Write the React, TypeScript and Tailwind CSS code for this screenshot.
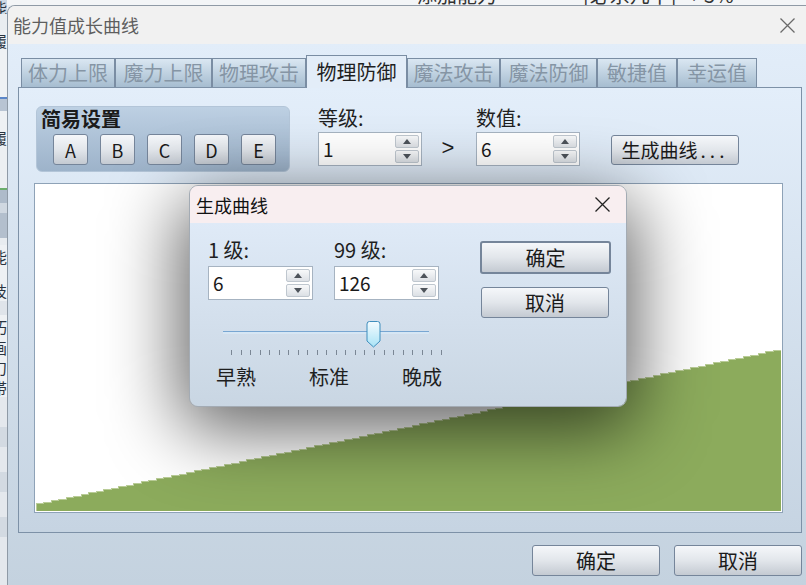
import React from "react";

function Arrow({ up }: { up?: boolean }) {
  return (
    <svg width="8" height="5" viewBox="0 0 8 5">
      <path d={up ? "M0 5 L4 0 L8 5 Z" : "M0 0 L8 0 L4 5 Z"} fill="#4d535a" />
    </svg>
  );
}

function SpinBox({ value, wide }: { value: string; wide?: boolean }) {
  return (
    <div className={`flex h-[34px] items-center border border-[#a6b3c1] bg-white ${wide ? "w-[105px]" : "w-[104px]"}`}>
      <span className="flex-1 pl-[4px] text-[19px] leading-[24px] text-[#1a1a1a]">{value}</span>
      <div className="mr-[2px] flex flex-col gap-[2px]">
        <div className="flex h-[13px] w-[24px] items-center justify-center rounded-[2px] border border-[#bfc7cf] bg-gradient-to-b from-[#f8f9fa] to-[#dce0e5]">
          <Arrow up />
        </div>
        <div className="flex h-[13px] w-[24px] items-center justify-center rounded-[2px] border border-[#bfc7cf] bg-gradient-to-b from-[#f8f9fa] to-[#dce0e5]">
          <Arrow />
        </div>
      </div>
    </div>
  );
}

function Btn({ children, className }: { children: React.ReactNode; className: string }) {
  return (
    <div
      className={`flex items-center justify-center rounded-[3px] border border-[#75859a] bg-gradient-to-b from-[#f5f7fa] via-[#e2e6eb] to-[#c4cad2] text-[#1a1a1a] ${className}`}
    >
      {children}
    </div>
  );
}

function CloseX({ color, size }: { color: string; size: number }) {
  return (
    <svg width={size} height={size} viewBox="0 0 15 15">
      <path d="M0.5 0.5 L14.5 14.5 M14.5 0.5 L0.5 14.5" stroke={color} strokeWidth="1.3" fill="none" />
    </svg>
  );
}

const tabs: { label: string; cls: string; active?: boolean }[] = [
  { label: "体力上限", cls: "w-[94px]" },
  { label: "魔力上限", cls: "w-[97px]" },
  { label: "物理攻击", cls: "w-[94px]" },
  { label: "物理防御", cls: "w-[101px]", active: true },
  { label: "魔法攻击", cls: "w-[93px]" },
  { label: "魔法防御", cls: "w-[97px]" },
  { label: "敏捷值", cls: "w-[80px]" },
  { label: "幸运值", cls: "w-[80px]" },
];

function chartPath() {
  const W = 745;
  const H = 326;
  let d = `M0 ${H}`;
  for (let i = 0; i < 99; i++) {
    const v = 6 + (120 * i) / 98;
    const h = Math.round((v / 255) * H);
    const x0 = ((i * W) / 99).toFixed(1);
    const x1 = (((i + 1) * W) / 99).toFixed(1);
    d += ` L${x0} ${H - h} L${x1} ${H - h}`;
  }
  d += ` L${W} ${H} Z`;
  return d;
}

const strip: { h: string; bg: string; ch?: string }[] = [
  { h: "h-[14px]", bg: "bg-[#cdd8e4]", ch: "能" },
  { h: "h-[16px]", bg: "bg-[#e9edf1]" },
  { h: "h-[20px]", bg: "bg-[#eef1f4]", ch: "履" },
  { h: "h-[47px]", bg: "bg-[#eef1f4]" },
  { h: "h-[2px]", bg: "bg-[#5b86c8]" },
  { h: "h-[12px]", bg: "bg-[#b8c4d3]" },
  { h: "h-[16px]", bg: "bg-[#eef1f4]" },
  { h: "h-[20px]", bg: "bg-[#eef1f4]", ch: "履" },
  { h: "h-[41px]", bg: "bg-[#eceff2]" },
  { h: "h-[2px]", bg: "bg-[#6cae6c]" },
  { h: "h-[13px]", bg: "bg-[#aebbca]" },
  { h: "h-[10px]", bg: "bg-[#d0d8e1]" },
  { h: "h-[25px]", bg: "bg-[#b3bfcd]" },
  { h: "h-[7px]", bg: "bg-[#e8ecf0]" },
  { h: "h-[22px]", bg: "bg-[#eef1f4]", ch: "能" },
  { h: "h-[12px]", bg: "bg-[#eef1f4]" },
  { h: "h-[22px]", bg: "bg-[#eef1f4]", ch: "技" },
  { h: "h-[14px]", bg: "bg-[#dfe4ea]" },
  { h: "h-[22px]", bg: "bg-[#eef1f4]", ch: "巧" },
  { h: "h-[20px]", bg: "bg-[#eef1f4]", ch: "画" },
  { h: "h-[20px]", bg: "bg-[#eef1f4]", ch: "刀" },
  { h: "h-[20px]", bg: "bg-[#eef1f4]", ch: "帯" },
  { h: "h-[30px]", bg: "bg-[#e4e8ed]" },
  { h: "h-[20px]", bg: "bg-[#d3dae2]" },
  { h: "h-[25px]", bg: "bg-[#e4e8ed]" },
  { h: "h-[20px]", bg: "bg-[#d3dae2]" },
  { h: "h-[25px]", bg: "bg-[#e4e8ed]" },
  { h: "h-[20px]", bg: "bg-[#d3dae2]" },
];

export default function App() {
  const ticks = Array.from({ length: 23 }, (_, i) => i);
  return (
    <div className="relative h-[585px] w-[806px] overflow-hidden bg-[#eceff3] font-['Noto_Sans_CJK_SC',sans-serif]">
      {/* background app (left strip) */}
      <div className="absolute left-0 top-0 flex h-full w-[7px] flex-col overflow-hidden text-[15px] leading-[15px] text-[#2a3440]">
        {strip.map((s, i) => (
          <div key={i} className={`flex shrink-0 items-center justify-end overflow-hidden ${s.h} ${s.bg}`}>
            {s.ch ? <span className="shrink-0 leading-[15px]">{s.ch}</span> : null}
          </div>
        ))}
        <div className="flex-1 bg-[#e4e8ed]" />
      </div>
      {/* background app (top strip) */}
      <div className="absolute left-[7px] top-0 flex h-[5px] w-[799px] overflow-hidden bg-[#f3f5f7] text-[20px] leading-[20px] text-[#333]">
        <div className="-mt-[15px] flex">
          <span className="ml-[410px]">添加能力</span>
          <span className="ml-[86px]">[必杀几率]</span>
          <span className="ml-[12px]">+ 5%</span>
        </div>
      </div>

      {/* main window */}
      <div className="absolute left-[7px] top-[5px] flex h-[600px] w-[812px] flex-col overflow-hidden rounded-tl-[8px] border-l border-t border-[#8f9aa6]">
        <div className="flex h-[38px] items-center bg-[#f1f1f1]">
          <span className="pl-[5px] text-[18px] leading-[24px] text-[#5e5e5e]">能力值成长曲线</span>
          <div className="ml-auto mr-[24px] flex">
            <CloseX color="#6a6a6a" size={15} />
          </div>
        </div>
        <div className="flex-1 bg-gradient-to-b from-[#e2edf9] to-[#c3d1de] pl-[10px] pt-[11px]">
          {/* tabs */}
          <div className="flex h-[32px] items-end pl-[3px]">
            {tabs.map((t) =>
              t.active ? (
                <div
                  key={t.label}
                  className={`relative z-10 -mb-[1px] h-[33px] border border-b-0 border-[#7a8da3] bg-[#e3edf8] text-center text-[20px] leading-[32px] text-[#1f1f1f] ${t.cls}`}
                >
                  {t.label}
                </div>
              ) : (
                <div
                  key={t.label}
                  className={`h-[29px] border border-b-0 border-[#7a8da3] bg-gradient-to-b from-[#dae7f2] to-[#a6bdd0] text-center text-[20px] leading-[28px] text-[#8595a5] ${t.cls}`}
                >
                  {t.label}
                </div>
              )
            )}
          </div>
          {/* panel */}
          <div className="h-[446px] w-[784px] border border-[#7d91a7] bg-gradient-to-b from-[#e3eefa] to-[#c6d4e2] pl-[15px] pt-[18px]">
            <div className="flex items-start">
              <div className="ml-[2px] h-[66px] w-[254px] rounded-[6px] border border-[#b3c5d8] bg-gradient-to-b from-[#bdd0e3] to-[#9db3ca]">
                <div className="pl-[4px] text-[20px] font-bold leading-[24px] text-[#1b1b1b]">简易设置</div>
                <div className="mt-[3px] flex gap-[12px] pl-[16px]">
                  {["A", "B", "C", "D", "E"].map((l) => (
                    <Btn key={l} className="h-[31px] w-[35px] text-[18px] leading-[22px]">
                      {l}
                    </Btn>
                  ))}
                </div>
              </div>
              <div className="ml-[28px] flex flex-col">
                <div className="text-[20px] leading-[24px] text-[#1f1f1f]">等级:</div>
                <div className="mt-[2px]">
                  <SpinBox value="1" />
                </div>
              </div>
              <div className="mt-[29px] w-[54px] pr-[2px] text-center font-['Liberation_Sans',sans-serif] text-[22px] leading-[26px] text-[#1f1f1f]">&gt;</div>
              <div className="flex flex-col">
                <div className="text-[20px] leading-[24px] text-[#1f1f1f]">数值:</div>
                <div className="mt-[2px]">
                  <SpinBox value="6" />
                </div>
              </div>
              <Btn className="ml-[31px] mt-[29px] h-[30px] w-[128px] text-[19px] leading-[24px]">
                生成曲线<span className="pl-[3px] tracking-[4px]">...</span>
              </Btn>
            </div>
            {/* chart */}
            <div className="mt-[11px] h-[330px] w-[749px] border border-[#8ea2b7] bg-white p-[1px]">
              <svg width="745" height="326" viewBox="0 0 745 326" shapeRendering="crispEdges">
                <path d={chartPath()} fill="#8cab5c" stroke="#b9cc97" strokeWidth="1" />
              </svg>
            </div>
          </div>
          {/* bottom buttons */}
          <div className="mt-[12px] flex w-[784px] justify-end gap-[14px]">
            <Btn className="h-[31px] w-[128px] text-[20px] leading-[24px]">确定</Btn>
            <Btn className="h-[31px] w-[128px] text-[20px] leading-[24px]">取消</Btn>
          </div>
        </div>
      </div>

      {/* dialog shadow */}
      <div className="absolute left-[180px] top-[200px] h-[230px] w-[456px] rounded-[24px] bg-[rgba(0,0,0,0.62)] blur-[36px]" />

      {/* dialog */}
      <div className="absolute left-[189px] top-[185px] flex h-[222px] w-[438px] flex-col overflow-hidden rounded-[9px] border border-[#a3abb4]">
        <div className="flex h-[37px] shrink-0 items-center bg-[#f8eef0]">
          <span className="pl-[6px] text-[18px] leading-[24px] text-[#111]">生成曲线</span>
          <div className="ml-auto mr-[16px] flex">
            <CloseX color="#222" size={15} />
          </div>
        </div>
        <div className="flex flex-1 bg-gradient-to-b from-[#dfeaf7] to-[#c9d6e3]">
          <div className="w-[290px] pl-[18px]">
            <div className="mt-[15px] flex">
              <div className="flex flex-col">
                <div className="text-[20px] leading-[24px] text-[#1f1f1f]">1 级:</div>
                <div className="mt-[4px]">
                  <SpinBox value="6" wide />
                </div>
              </div>
              <div className="ml-[21px] flex flex-col">
                <div className="text-[20px] leading-[24px] text-[#1f1f1f]">99 级:</div>
                <div className="mt-[4px]">
                  <SpinBox value="126" wide />
                </div>
              </div>
            </div>
            {/* slider */}
            <div className="relative ml-[15px] mt-[31px] h-[3px] w-[206px] border-t border-[#78a6d2] bg-[#d6e6f4]">
              <div className="absolute left-[143px] top-[-11px]">
                <svg width="15" height="27" viewBox="0 0 15 27">
                  <defs>
                    <linearGradient id="th" x1="0" y1="0" x2="0" y2="1">
                      <stop offset="0" stopColor="#f4fbff" />
                      <stop offset="1" stopColor="#a9e3f6" />
                    </linearGradient>
                  </defs>
                  <path d="M1 3 Q1 0.5 3.5 0.5 H11.5 Q14 0.5 14 3 V20 L7.5 26 L1 20 Z" fill="url(#th)" stroke="#3f8ebd" strokeWidth="1" />
                </svg>
              </div>
            </div>
            <div className="ml-[23px] mt-[16px] flex h-[5px] w-[211px] justify-between">
              {ticks.map((i) => (
                <div key={i} className="h-[5px] w-[1px] bg-[#7b8795]" />
              ))}
            </div>
            <div className="mt-[10px] flex text-[20px] leading-[24px] text-[#1f1f1f]">
              <span className="ml-[8px]">早熟</span>
              <span className="ml-[53px]">标准</span>
              <span className="ml-[53px]">晚成</span>
            </div>
          </div>
          <div className="flex flex-col pt-[18px]">
            <Btn className="h-[33px] w-[131px] border-2 border-[#6b7e96] text-[20px] leading-[24px]">确定</Btn>
            <Btn className="ml-[1px] mt-[13px] h-[31px] w-[128px] text-[20px] leading-[24px]">取消</Btn>
          </div>
        </div>
      </div>
    </div>
  );
}
